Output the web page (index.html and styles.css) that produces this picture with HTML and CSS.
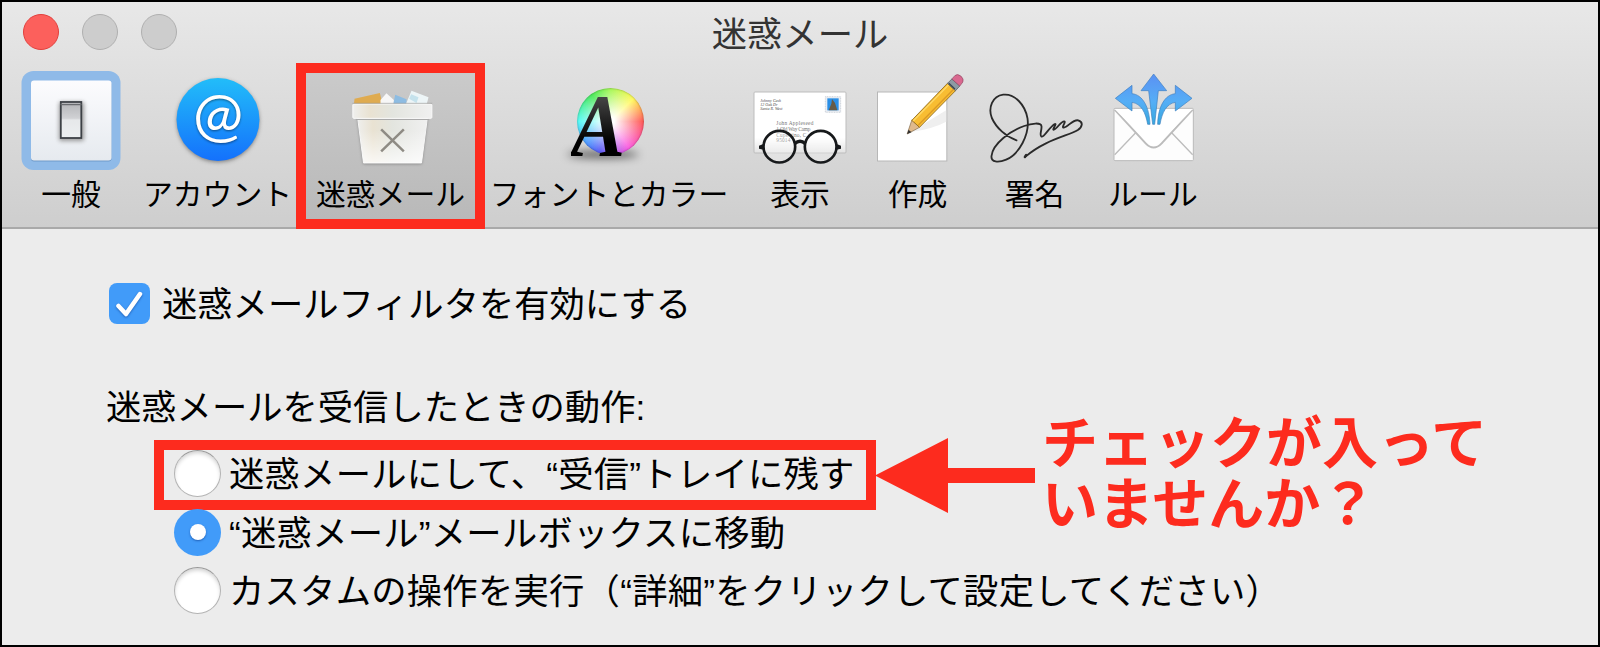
FILE: index.html
```html
<!doctype html>
<html lang="ja">
    <head>
        <meta charset="UTF-8" />
        <meta name="viewport" content="width=device-width, initial-scale=1.0" />
        <title>迷惑メール</title>
        <link rel="stylesheet" href="styles.css">
    </head>
    <body>
        <div class="window">
            <header>
                <div class="titlebar">
                    <div class="lights">
                        <span class="light close"></span>
                        <span class="light"></span>
                        <span class="light"></span>
                    </div>
                    <h1>迷惑メール</h1>
                </div>

                <nav class="toolbar">
                    <div class="tool">
                        <svg class="icon" viewBox="0 0 100 100">
                            <defs>
                                <linearGradient id="plate" x2="0" y2="1">
                                    <stop offset="0" stop-color="#fcfcfe" />
                                    <stop offset="1" stop-color="#e6eaef" />
                                </linearGradient>
                                <linearGradient id="rocker" x2="0" y2="1">
                                    <stop offset="0" stop-color="#dcdce0" />
                                    <stop offset=".1" stop-color="#b9babd" />
                                    <stop offset=".45" stop-color="#d0d1d4" />
                                    <stop offset=".5" stop-color="#e6e8ea" />
                                    <stop offset="1" stop-color="#eceff1" />
                                </linearGradient>
                            </defs>
                            <rect x=".5" width="99" height="99" rx="12" fill="#8fbae8" />
                            <rect x="10" y="10.5" width="80.5" height="80" rx="3" fill="#6f9ac9" />
                            <rect x="10" y="9.5" width="80.5" height="80" rx="3" fill="url(#plate)" />
                            <rect class="soft" x="38" y="31" width="25" height="39" rx="2" fill="#999" />
                            <rect x="39.8" y="31" width="20.5" height="36" fill="url(#rocker)" stroke="#3d4146" stroke-width="1.8" />
                            <path d="M39.5 33.5h21" stroke="#696b6f" stroke-width="1.5" />
                        </svg>
                        <span class="label">一般</span>
                    </div>

                    <div class="tool">
                        <svg class="icon" viewBox="0 0 100 100">
                            <defs>
                                <linearGradient id="sky" x2="0" y2="1">
                                    <stop offset="0" stop-color="#22bdf9" />
                                    <stop offset="1" stop-color="#1471fc" />
                                </linearGradient>
                            </defs>
                            <circle class="soft" cx="50" cy="50" r="41" fill="#777" />
                            <circle cx="50" cy="48.5" r="41.5" fill="url(#sky)" />
                            <text class="at" x="50" y="65">@</text>
                        </svg>
                        <span class="label">アカウント</span>
                    </div>

                    <div class="tool selected">
                        <svg class="icon" viewBox="151.5 63 300 300">
                            <defs>
                                <linearGradient id="bin">
                                    <stop offset="0" stop-color="#efefed" />
                                    <stop offset=".22" stop-color="#e9e2d2" />
                                    <stop offset=".5" stop-color="#e3e5df" />
                                    <stop offset="1" stop-color="#f0f0f0" />
                                </linearGradient>
                                <linearGradient id="binShade" x2="0" y2="1">
                                    <stop offset=".3" stop-color="#fff" stop-opacity="0" />
                                    <stop offset="1" stop-color="#fff" stop-opacity=".75" />
                                </linearGradient>
                            </defs>
                            <path d="M190 165l2-19 76-17 9 36z" fill="#dfab50" />
                            <path d="M270 150l18-20 22 20v15h-40z" fill="#f7f7f7" />
                            <path d="M308 165l6-31 34 14v17z" fill="#8dbce2" />
                            <path d="M345 165l18-43 51 20-6 23z" fill="#edf5f7" />
                            <path d="M356 146l6-13 22 9-6 17z" fill="#c5e2ec" />
                            <path d="M201 200h210l-18 141H219z" fill="#777" class="soft-lg" />
                            <path d="M201 200h210l-18 139H219z" fill="url(#bin)" stroke="#f6f6f6" stroke-width="3" />
                            <path d="M201 200h210l-18 139H219z" fill="url(#binShade)" />
                            <path d="M196 208h220" stroke="#aaa" stroke-width="4" />
                            <rect x="187" y="162" width="237" height="43" rx="3" fill="url(#bin)" stroke="#fafafa" stroke-width="3" />
                            <path d="M186 160h239" stroke="#9a9a97" stroke-width="2" />
                            <path d="M272 238l68 66M340 238l-68 66" stroke="#8e8b84" stroke-width="7.5" />
                        </svg>
                        <span class="label">迷惑メール</span>
                    </div>

                    <div class="tool">
                        <div class="icon fonts">
                            <span class="wheel"></span>
                            <span class="letter">A</span>
                        </div>
                        <span class="label">フォントとカラー</span>
                    </div>

                    <div class="tool">
                        <svg class="icon" viewBox="60 33 300 300">
                            <defs>
                                <linearGradient id="card" x2="0" y2="1">
                                    <stop offset=".75" stop-color="#fff" />
                                    <stop offset="1" stop-color="#e2e2e2" />
                                </linearGradient>
                            </defs>
                            <rect x="72" y="96" width="276" height="183" rx="3" fill="url(#card)" stroke="#bdbdbd" stroke-width="3" />
                            <g class="script small">
                                <text x="91" y="125">Johnny Cash</text>
                                <text x="91" y="137">12 Oak Dr</text>
                                <text x="91" y="150">Santa R. West</text>
                            </g>
                            <g class="script">
                                <text x="139" y="195" textLength="111">John Appleseed</text>
                                <text x="139" y="212" textLength="102">1 Old Way Camp</text>
                                <text x="139" y="230" textLength="90">Cupertino, C</text>
                                <text x="139" y="247" textLength="42">95014</text>
                            </g>
                            <rect x="286" y="110" width="46" height="47" fill="#e9edf3" stroke="#bcc3cc" stroke-width="2" stroke-dasharray="3 2" />
                            <rect x="292" y="115" width="34" height="36" fill="#2a8fe6" />
                            <path d="M296 151l8-20 2-14 9 12 7 22z" fill="#665b46" />
                            <g fill="none" stroke="#17191b" stroke-width="8">
                                <circle cx="148" cy="260" r="47.5" fill="#fff" fill-opacity=".3" />
                                <circle cx="272" cy="260" r="47.5" fill="#fff" fill-opacity=".3" />
                                <path d="M194 251q16-14 32 0" stroke-width="10" />
                            </g>
                            <path d="M87 257l13-5v17l-13-3zM333 257l-13-5v17l13-3z" fill="#17191b" />
                        </svg>
                        <span class="label">表示</span>
                    </div>

                    <div class="tool">
                        <svg class="icon" viewBox="412.5 33 300 300">
                            <rect x="441" y="96" width="208" height="207" fill="#fff" stroke="#b7b7b7" stroke-width="3" />
                            <path d="M540 216l107-65v34q-40 22-107 31z" fill="#efefef" />
                            <path d="M530 222l14-42 23 22z" fill="#dfb98c" stroke="#7d6544" stroke-width="2" />
                            <path d="M530 222l4-13 9 8z" fill="#333" />
                            <path d="M544 181L651 70l24 22-108 110z" fill="#f8bd32" stroke="#8b681c" stroke-width="2.5" />
                            <path d="M563 196L670 87" stroke="#dc9a25" stroke-width="4" />
                            <path d="M548 183L654 75" stroke="#ffd966" stroke-width="4" />
                            <path d="M651 70l13-13 24 21-13 14z" fill="#8d9aa3" stroke="#4b545b" stroke-width="2" />
                            <path d="M655 70l18 17" stroke="#394653" stroke-width="4" />
                            <path d="M664 57l9-10q7-7 18 1 10 9 6 18l-9 12z" fill="#d9688f" stroke="#8e4862" stroke-width="2" />
                        </svg>
                        <span class="label">作成</span>
                    </div>

                    <div class="tool">
                        <svg class="icon" viewBox="73.5 33 300 300">
                            <g fill="none" stroke="#2a2a2a" stroke-width="5.5" stroke-linecap="round" stroke-linejoin="round">
                                <path d="M168 241C137 230 108 205 94 174C82 143 96 108 128 104C163 100 194 135 201 175C208 224 176 282 137 299C113 309 91 307 93 288C97 250 151 212 191 198C213 190 242 186 243 199C244 211 236 226 243 230C251 233 269 198 283 192C291 189 273 211 280 209C291 206 300 184 311 184C318 185 301 203 310 203C322 201 337 178 353 181C369 186 366 200 352 210C328 226 253 239 195 290" />
                                <path d="M197 285l-4 6" stroke-width="7" />
                            </g>
                        </svg>
                        <span class="label">署名</span>
                    </div>

                    <div class="tool">
                        <svg class="icon" viewBox="429 33 300 300">
                            <defs>
                                <linearGradient id="arrows" gradientUnits="userSpaceOnUse" x1="0" y1="40" x2="0" y2="195">
                                    <stop offset="0" stop-color="#5b90f3" />
                                    <stop offset=".55" stop-color="#55aef6" />
                                    <stop offset="1" stop-color="#35a9de" />
                                </linearGradient>
                            </defs>
                            <rect x="462" y="145" width="238" height="157" rx="3" fill="#fdfdfd" stroke="#bababa" stroke-width="3" />
                            <path d="M464 284l63-66M698 284l-63-66" stroke="#bdbdbd" stroke-width="4" />
                            <path d="M464 149l93 101q24 25 48 0l93-101" fill="#fff" stroke="#bcbcbc" stroke-width="6" />
                            <path d="M464 147l95 97q22 22 44 0l95-97z" fill="#fff" />
                            <g fill="url(#arrows)" stroke="#3c7fc0" stroke-width="2">
                                <path d="M466 115l50-39v25c32 3 52 40 54 92h-7c-6-36-20-62-47-66v26z" />
                                <path d="M696 115l-50-39v25c-32 3-52 40-53 92h7c6-36 20-62 46-66v26z" />
                                <path d="M581 42l39 50h-25l-11 101h-6l-12-101h-23z" />
                            </g>
                        </svg>
                        <span class="label">ルール</span>
                    </div>
                </nav>
            </header>

            <main>
                <label class="check-row">
                    <span class="checkbox">
                        <svg viewBox="0 0 41 41">
                            <path d="M9.5 23l7.5 8L31 11" fill="none" stroke="#fff" stroke-width="4.5" stroke-linecap="round" stroke-linejoin="round" />
                        </svg>
                    </span>
                    <span class="text">迷惑メールフィルタを有効にする</span>
                </label>

                <h2>迷惑メールを受信したときの動作:</h2>

                <div class="options">
                    <label class="option">
                        <span class="radio"></span>
                        <span class="text">迷惑メールにして、“受信”トレイに残す</span>
                        <span class="option-frame"></span>
                    </label>
                    <label class="option">
                        <span class="radio on"></span>
                        <span class="text">“迷惑メール”メールボックスに移動</span>
                    </label>
                    <label class="option">
                        <span class="radio"></span>
                        <span class="text">カスタムの操作を実行（“詳細”をクリックして設定してください）</span>
                    </label>
                </div>
            </main>

            <!-- red notes on top of the window -->
            <div class="callout">
                <svg class="arrow" viewBox="0 0 160 75">
                    <path d="M0 37.5L73 0v30h87v15H73v30z" fill="#fd2b1e" />
                </svg>
                <p>チェックが入って<br>いませんか？</p>
            </div>
        </div>
    </body>
</html>
```

FILE: styles.css
```css
* {
    box-sizing: border-box;
}
body {
    margin: 0;
    font-family: "Liberation Sans", "Noto Sans CJK JP", sans-serif;
    font-size: 35.3px;
    color: #000;
}
h1,
h2,
p {
    margin: 0;
    font-size: inherit;
    font-weight: normal;
}
.window {
    position: relative;
    width: 1600px;
    height: 647px;
    border: 2px solid #000;
    background: #ececec;
    overflow: hidden;
}
header {
    height: 227px;
    background: linear-gradient(#e8e8e8, #cecece);
    border-bottom: 2px solid #a9a9a9;
}
.titlebar {
    display: grid;
    grid-template-columns: 1fr auto 1fr;
    align-items: center;
    height: 63px;
}
.titlebar h1 {
    padding-top: 2px;
    color: #333;
    line-height: 60px;
}
.lights {
    display: flex;
    gap: 23px;
    padding: 0 0 3px 21px;
}
.light {
    width: 36px;
    height: 36px;
    border: 1.5px solid #b0b0b0;
    border-radius: 50%;
    background: #cdcdcd;
}
.light.close {
    background: #fc605c;
    border-color: #e2403d;
}

/* toolbar */
.toolbar {
    display: grid;
    grid-template-columns: 138px 155px 191px 246px 136px 99px 135px 102px;
    height: 162px;
}
.tool {
    display: flex;
    flex-direction: column;
    align-items: center;
    padding-top: 6px;
}
.icon {
    flex: none;
    width: 100px;
    height: 100px;
    overflow: visible;
}
.label {
    font-size: 29.8px;
    line-height: 48px;
    white-space: nowrap;
}
.tool.selected {
    margin: -2px 1px 0;
    padding: 0;
    border: 10px solid #fd2b1e;
    height: 166px;
    background: linear-gradient(#cacaca, #b9b9b9);
}
.tool.selected .icon {
    margin-top: -2px;
}
.soft {
    filter: blur(2px);
}
.soft-lg {
    filter: blur(4px);
}
.at {
    font-family: Lato, sans-serif;
    font-size: 60px;
    fill: #fff;
    text-anchor: middle;
    filter: drop-shadow(0 1px 1px rgba(0, 0, 0, 0.45));
}
.fonts {
    position: relative;
}
.wheel {
    position: absolute;
    left: 18px;
    top: 17px;
    width: 67px;
    height: 67px;
    border-radius: 50%;
    background:
        radial-gradient(circle, #fff 8%, rgba(255, 255, 255, 0) 68%),
        conic-gradient(#a8f75a, #fff95c 45deg, #ff5b58 90deg, #fb5fe0 145deg, #5a5cf5 200deg, #4f9dff 230deg, #57fbf6 270deg, #4ce95a 325deg, #a8f75a);
    box-shadow: inset 0 0 2px rgba(0, 0, 0, 0.45);
}
.fonts::before {
    content: "";
    position: absolute;
    left: 8px;
    top: 80px;
    width: 72px;
    height: 7px;
    border-radius: 50%;
    background: rgba(0, 0, 0, 0.6);
    filter: blur(4px);
}
.letter {
    position: absolute;
    left: 12px;
    top: 15px;
    font: italic bold 88px/80px "Liberation Serif", serif;
    color: transparent;
    background: linear-gradient(#444 15%, #000 70%);
    background-clip: text;
    transform: scaleX(0.92);
    transform-origin: left;
}
.script {
    font: 16px "Liberation Serif", serif;
    fill: #777;
}
.script.small {
    font-size: 12px;
    font-style: italic;
    fill: #444;
}

/* settings */
main {
    padding: 53px 0 0 104px;
}
.text {
    line-height: 48px;
    padding-top: 3px;
}
.check-row {
    display: flex;
    align-items: center;
    height: 42px;
    padding-left: 3px;
}
.checkbox {
    width: 41px;
    height: 41px;
    margin-right: 12px;
    border-radius: 8px;
    background: #419bf9;
}
.checkbox svg {
    display: block;
    filter: drop-shadow(0 1px 1px rgba(0, 40, 120, 0.5));
}
h2 {
    margin-top: 56px;
    line-height: 56px;
}
.options {
    padding: 8px 0 0 68px;
}
.option {
    position: relative;
    display: flex;
    align-items: center;
    gap: 8px;
    height: 58.8px;
    letter-spacing: 0.26px;
    white-space: nowrap;
}
.radio {
    width: 47px;
    height: 47px;
    border: 1.5px solid #b3b3b3;
    border-top-color: #999;
    border-radius: 50%;
    background: #fff;
    box-shadow: inset 0 3px 4px -1px rgba(0, 0, 0, 0.2);
}
.radio.on {
    display: grid;
    place-items: center;
    border: 0;
    background: #419bf9;
    box-shadow: none;
}
.radio.on::after {
    content: "";
    width: 16px;
    height: 16px;
    border-radius: 50%;
    background: #fff;
    box-shadow: 0 1px 2px rgba(0, 40, 120, 0.5);
}
.option-frame {
    position: absolute;
    left: -20px;
    top: -4px;
    width: 722px;
    height: 70px;
    border: 10px solid #fd2b1e;
}
.callout {
    position: absolute;
    left: 873px;
    top: 408px;
    display: flex;
    align-items: flex-start;
    gap: 7px;
    color: #fd2b1e;
}
.callout .arrow {
    width: 160px;
    height: 75px;
    margin-top: 28px;
}
.callout p {
    padding-top: 3px;
    font-size: 56px;
    font-weight: bold;
    line-height: 61px;
    white-space: nowrap;
}
```
